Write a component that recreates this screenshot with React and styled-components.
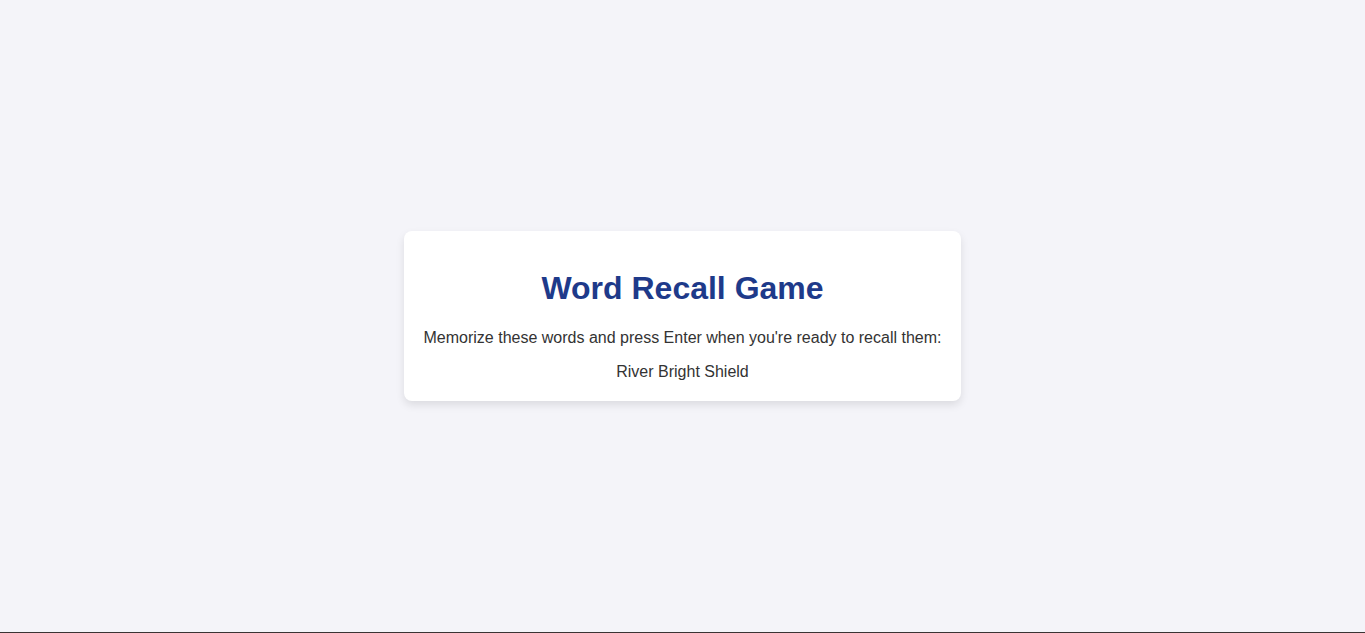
import styled, { createGlobalStyle } from 'styled-components';

const GlobalStyle = createGlobalStyle`
  html, body {
    margin: 0;
    padding: 0;
    background: #f4f4f9;
    font-family: "Liberation Sans", Arial, sans-serif;
  }
`;

const Stage = styled.main`
  height: calc(100vh - 1px);
  display: flex;
  justify-content: center;
  align-items: center;
`;

const Card = styled.section`
  background: #ffffff;
  padding: 20px;
  border-radius: 8px;
  box-shadow: 0 4px 8px rgba(0, 0, 0, 0.1);
  text-align: center;
  color: #333333;
`;

const Title = styled.h1`
  margin: 19.44px 0 22.44px;
  font-size: 32px;
  font-weight: bold;
  color: #1e3a8a;
`;

const Text = styled.p`
  margin: ${({ $last }) => ($last ? '16px 0 0' : '16px 0')};
  font-size: 16px;
`;

const BottomRule = styled.div`
  height: 1px;
  background: #3a3434;
`;

const words = ['River', 'Bright', 'Shield'];

export default function App() {
  return (
    <>
      <GlobalStyle />
      <Stage>
        <Card>
          <Title>Word Recall Game</Title>
          <Text>Memorize these words and press Enter when you're ready to recall them:</Text>
          <Text $last>{words.join(' ')}</Text>
        </Card>
      </Stage>
      <BottomRule />
    </>
  );
}
